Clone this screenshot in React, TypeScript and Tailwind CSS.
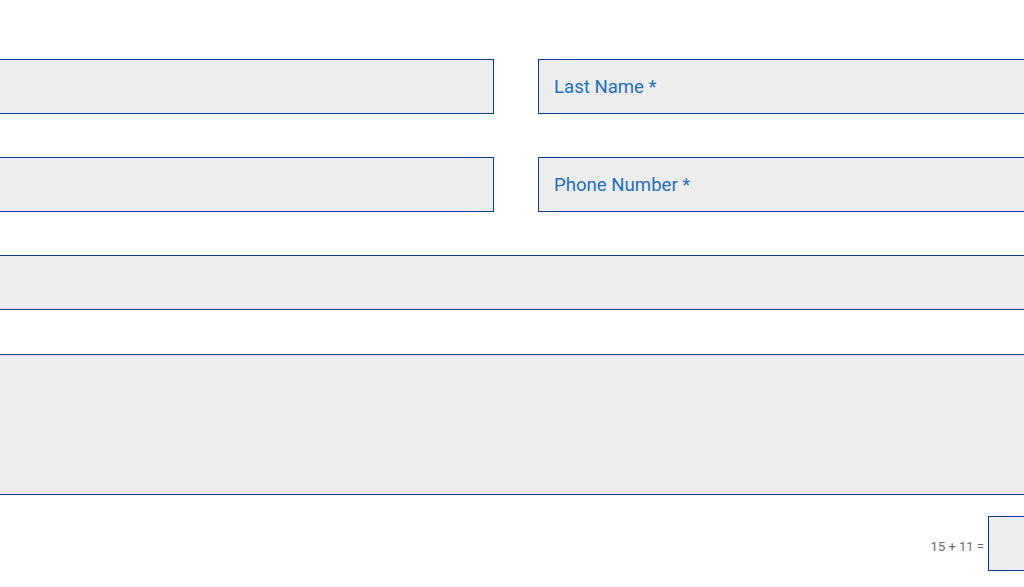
import React from 'react'

const field = "h-[55px] w-full border border-[#0b3a94] bg-[#ededed] px-[15px] text-[18.6px] text-[#1d6fc6] placeholder:text-[#1d6fc6] outline-none"

export default function App() {
    return (
        <div className="w-[1024px] h-[587px] overflow-hidden bg-white" style={{ fontFamily: 'Roboto, "Liberation Sans", sans-serif' }}>
            <div className="-ml-[16px] w-[1064px] pt-[59px]">
                <div className="grid grid-cols-2 gap-x-[44px] gap-y-[43px]">
                    <input className={field} placeholder="" />
                    <input className={field} placeholder="Last Name *" />
                    <input className={field} placeholder="" />
                    <input className={field} placeholder="Phone Number *" />
                </div>
                <div className="mt-[43px]">
                    <input className={field} placeholder="" />
                </div>
                <div className="mt-[44px]">
                    <textarea className="block h-[141px] w-full resize-none border border-[#0b3a94] bg-[#ededed] outline-none" />
                </div>
                <div className="mt-[21px] flex items-center justify-end">
                    <span className="mr-[4px] mt-[6px] text-[13px] text-[#6e6a66]">15 + 11 =</span>
                    <input className="h-[55px] w-[60px] border border-[#0b3a94] bg-[#ededed] outline-none" />
                </div>
            </div>
        </div>
    )
}
